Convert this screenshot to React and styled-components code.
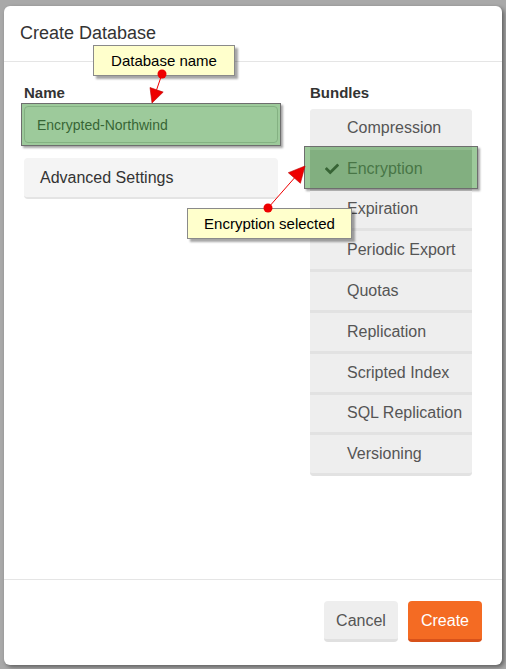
import React from 'react'
import styled, { createGlobalStyle } from 'styled-components'
import { FaCheck } from 'react-icons/fa'

const bundles = [
  'Compression',
  'Encryption',
  'Expiration',
  'Periodic Export',
  'Quotas',
  'Replication',
  'Scripted Index',
  'SQL Replication',
  'Versioning',
]

const App = () => {
  return (
    <>
      <Global />
      <Page>
        <Dialog>
          <Header>
            <Title>Create Database</Title>
          </Header>
          <Body>
            <Left>
              <Label>Name</Label>
              <InputWrap>
                <NameInput defaultValue="Encrypted-Northwind" />
                <Highlight $inset="-3px" />
              </InputWrap>
              <Panel>Advanced Settings</Panel>
            </Left>
            <Right>
              <Label>Bundles</Label>
              <List>
                {bundles.map((b) => {
                  const on = b === 'Encryption'
                  return (
                    <Item key={b} $selected={on}>
                      <Check>{on && <FaCheck />}</Check>
                      {b}
                      {on && <Highlight $inset="-4px -6px -1px -6px" />}
                    </Item>
                  )
                })}
              </List>
            </Right>
          </Body>
          <Footer>
            <Button>Cancel</Button>
            <Button $primary>Create</Button>
          </Footer>
        </Dialog>

        <Callout style={{ left: 93, top: 45, width: 142 }}>Database name</Callout>
        <Callout style={{ left: 187, top: 208, width: 165 }}>Encryption selected</Callout>

        <Arrows width="506" height="669" viewBox="0 0 506 669">
          <line x1="162" y1="74" x2="156.6" y2="89.8" stroke="#e00" strokeWidth="1" />
          <polygon points="152,103 163.2,92.1 150,87.5" fill="#e00" stroke="#b00" strokeWidth="0.6" />
          <circle cx="162" cy="74" r="4.5" fill="#e00" />

          <line x1="268" y1="208" x2="294.4" y2="178" stroke="#e00" strokeWidth="1" />
          <polygon points="305,166 300.4,183.3 288.3,172.7" fill="#e00" stroke="#b00" strokeWidth="0.6" />
          <circle cx="268" cy="208" r="4.5" fill="#e00" />
        </Arrows>
      </Page>
    </>
  )
}

const Global = createGlobalStyle`
  * { box-sizing: border-box; }
  body {
    margin: 0;
    background: #a9a9a9;
    font-family: "Liberation Sans", Arial, sans-serif;
  }
`

const Page = styled.div`
  position: relative;
  width: 506px;
  height: 669px;
  padding: 6px 4px 4px 4px;
`

const Dialog = styled.div`
  height: 100%;
  background: #fff;
  border-radius: 6px;
  box-shadow: 2px 2px 4px rgba(0, 0, 0, 0.45);
  display: flex;
  flex-direction: column;
`

const Header = styled.div`
  height: 56px;
  padding: 0 16px;
  display: flex;
  align-items: center;
  border-bottom: 1px solid #e5e5e5;
`

const Title = styled.div`
  font-size: 18px;
  color: #333;
`

const Body = styled.div`
  flex: 1;
  display: flex;
  gap: 32px;
  padding: 20px 0 0 20px;
`

const Left = styled.div`
  width: 254px;
  display: flex;
  flex-direction: column;
`

const Right = styled.div`
  width: 162px;
  display: flex;
  flex-direction: column;
`

const Label = styled.div`
  font-size: 15px;
  font-weight: bold;
  color: #333;
  line-height: 21px;
`

const InputWrap = styled.div`
  position: relative;
  margin-top: 3px;
`

const NameInput = styled.input`
  display: block;
  width: 100%;
  height: 37px;
  padding: 0 12px;
  border: 1px solid #ccc;
  border-radius: 4px;
  font-family: inherit;
  font-size: 14px;
  color: #333;
  background: #fff;
`

const Highlight = styled.div`
  position: absolute;
  inset: ${(p) => p.$inset};
  background: rgba(60, 150, 55, 0.5);
  border: 1px solid #6e6e6e;
  box-shadow: 2px 2px 2px rgba(0, 0, 0, 0.35);
  pointer-events: none;
`

const Panel = styled.div`
  margin-top: 15px;
  height: 41px;
  padding-left: 16px;
  display: flex;
  align-items: center;
  background: #f4f4f4;
  border-radius: 4px;
  border-bottom: 2px solid #e4e4e4;
  font-size: 16px;
  color: #333;
`

const List = styled.div`
  margin-top: 6px;
  border-radius: 4px;
  background: #eee;
`

const Item = styled.div`
  position: relative;
  height: 40.8px;
  padding-left: 15px;
  display: flex;
  align-items: center;
  background: ${(p) => (p.$selected ? '#c9c9c9' : '#eee')};
  border-bottom: 3px solid #e2e2e2;
  font-size: 16px;
  color: #555;
  &:first-child { border-radius: 4px 4px 0 0; }
  &:last-child { border-radius: 0 0 4px 4px; }
`

const Check = styled.span`
  width: 22px;
  display: inline-flex;
  align-items: center;
  font-size: 14px;
  color: #333;
`

const Footer = styled.div`
  height: 86px;
  border-top: 1px solid #e5e5e5;
  display: flex;
  justify-content: flex-end;
  align-items: flex-start;
  gap: 10px;
  padding: 21px 20px 0 0;
`

const Button = styled.button`
  width: 74px;
  height: 41px;
  border: none;
  border-radius: 4px;
  padding-top: 3px;
  font-family: inherit;
  font-size: 16px;
  background: ${(p) => (p.$primary ? '#f46b23' : '#eee')};
  color: ${(p) => (p.$primary ? '#fff' : '#555')};
  border-bottom: 3px solid ${(p) => (p.$primary ? '#d8521a' : '#e0e0e0')};
`

const Callout = styled.div`
  position: absolute;
  height: 31px;
  display: flex;
  align-items: center;
  justify-content: center;
  white-space: nowrap;
  background: #ffffcc;
  border: 1px solid #8a8a8a;
  box-shadow: 3px 3px 2px rgba(0, 0, 0, 0.35);
  font-size: 15px;
  color: #000;
`

const Arrows = styled.svg`
  position: absolute;
  left: 0;
  top: 0;
  pointer-events: none;
`

export default App
